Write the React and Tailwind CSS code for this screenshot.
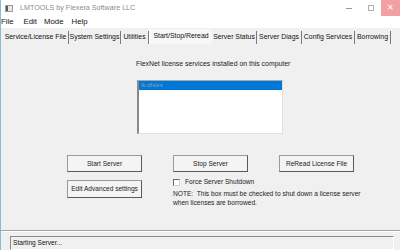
import React from 'react';

const TABS = [
  { label: 'Service/License File', w: 'w-[66px]' },
  { label: 'System Settings', w: 'w-[52px]' },
  { label: 'Utilities', w: 'w-[28px]' },
  { label: 'Start/Stop/Reread', w: 'w-[63px]', active: true },
  { label: 'Server Status', w: 'w-[45px]' },
  { label: 'Server Diags', w: 'w-[45px]' },
  { label: 'Config Services', w: 'w-[53px]' },
  { label: 'Borrowing', w: 'w-[36px]' },
];

function Btn({ children, className = '' }) {
  return (
    <button
      className={`w-[75px] h-[17px] bg-[#f4f4f4] border border-[#9a9a9a] border-r-[#5a5a5a] border-b-[#5a5a5a] text-[6.6px] text-[#222] flex items-center justify-center ${className}`}
    >
      {children}
    </button>
  );
}

export default function App() {
  return (
    <div className="w-[400px] h-[250px] bg-[#f0f0f0] flex flex-col border-l border-[#86bccd] font-['Liberation_Sans',sans-serif] overflow-hidden select-none">
      {/* Title bar */}
      <div className="h-[16px] bg-white flex items-center shrink-0">
        <div className="ml-[4px] w-[8px] h-[7px] border border-[#9a9a9a] bg-[#e8e8e8] flex">
          <div className="w-[2px] h-full bg-[#5c5c5c]" />
        </div>
        <span className="ml-[7px] text-[7.2px] text-[#8c8c8c] leading-none">LMTOOLS by Flexera Software LLC</span>
        <div className="ml-auto flex items-center h-full">
          <div className="w-[20px] flex justify-center">
            <div className="w-[6px] h-px bg-[#9a9a9a]" />
          </div>
          <div className="w-[20px] ml-[2px] flex justify-center">
            <div className="w-[6px] h-[6px] border border-[#b0b0b0]" />
          </div>
          <div className="w-[19px] h-full bg-[#f2a1a3] flex items-center justify-center text-white text-[8px] leading-none">
            ✕
          </div>
        </div>
      </div>

      {/* Menu bar */}
      <div className="h-[12px] bg-white flex items-center text-[7.8px] text-[#111] leading-none shrink-0">
        <span className="ml-[0px]">File</span>
        <span className="ml-[10px]">Edit</span>
        <span className="ml-[7px]">Mode</span>
        <span className="ml-[8px]">Help</span>
      </div>

      {/* Tabs */}
      <div className="h-[16px] flex items-end pl-[2px] shrink-0">
        {TABS.map((t) => (
          <div
            key={t.label}
            className={`${t.w} h-[13px] flex items-center justify-center text-[6.9px] leading-none text-[#111] whitespace-nowrap ${
              t.active
                ? 'bg-[#f7f7f7] h-[15px] border-l border-white'
                : 'border-r border-[#7a7a7a]'
            }`}
          >
            {t.label}
          </div>
        ))}
      </div>

      {/* Content */}
      <div className="flex-1 flex flex-col">
        <div className="pl-[135px] pt-[16px] text-[6.9px] leading-[8px] text-[#222]">
          FlexNet license services installed on this computer
        </div>
        <div className="ml-[136px] mt-[12px] w-[146px] h-[54px] bg-white border border-[#a8a8a8] border-l-2 border-l-[#8a8a8a] border-r-[#e0e0e0] border-b-[#e0e0e0]">
          <div className="h-[9px] bg-[#0078d7] text-[6px] leading-[9px] pl-[2px] text-[#9a9aa6]">lk:dfsles</div>
        </div>

        <div className="mt-[21px] pl-[66px] flex gap-[31px]">
          <Btn className="border-[#6a6a6a]">Start Server</Btn>
          <Btn>Stop Server</Btn>
          <Btn>ReRead License File</Btn>
        </div>

        <div className="mt-[6px] pl-[66px] flex gap-[31px]">
          <Btn className="h-[18px] mt-[2px]">Edit Advanced settings</Btn>
          <div className="flex flex-col text-[6.6px] text-[#222]">
            <div className="flex items-center h-[9px]">
              <div className="w-[7px] h-[7px] bg-white border border-[#6a6a6a] border-r-[#d0d0d0] border-b-[#d0d0d0]" />
              <span className="ml-[5px] leading-none">Force Server Shutdown</span>
            </div>
            <div className="mt-[2px] leading-[9px] w-[200px]">
              NOTE:&nbsp; This box must be checked to shut down a license server
              <br />
              when licenses are borrowed.
            </div>
          </div>
        </div>
      </div>

      {/* Separator + status */}
      <div className="h-px bg-[#a0a0a0] shrink-0" />
      <div className="h-px bg-white shrink-0" />
      <div className="h-[18px] flex items-start pt-[4px] pl-[9px] pr-[6px] shrink-0">
        <div className="flex-1 h-[14px] border border-[#8a8a8a] border-r-white border-b-white flex items-center pl-[2px] text-[6.6px] leading-none text-[#111]">
          Starting Server...
        </div>
      </div>
    </div>
  );
}
